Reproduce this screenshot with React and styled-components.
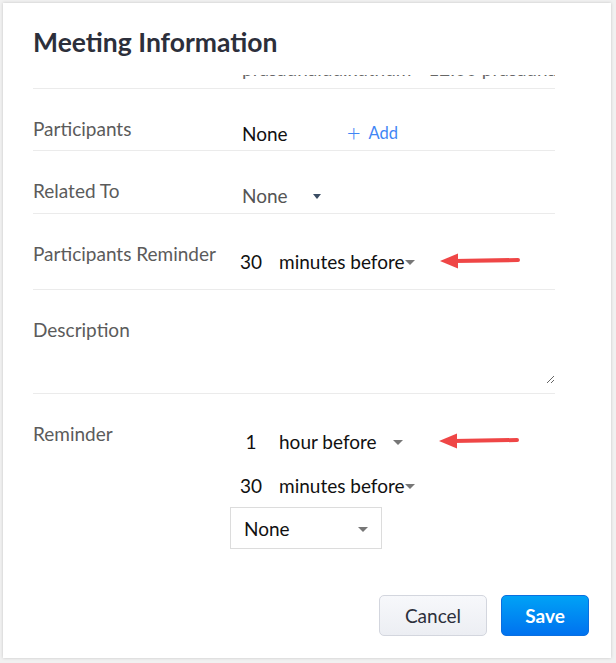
import React from "react";
import styled, { createGlobalStyle } from "styled-components";

const Global = createGlobalStyle`
  html, body { margin: 0; padding: 0; background: #f1f1f1; }
  body { font-family: Lato, "Noto Sans", sans-serif; padding: 3px 5px 5px 3px; }
  * { box-sizing: border-box; }
`;

const Card = styled.div`
  width: 608px;
  height: 655px;
  background: #fff;
  box-shadow: 0 0 3px rgba(0, 0, 0, 0.18);
  display: flex;
  flex-direction: column;
`;

const Title = styled.h1`
  margin: 0;
  height: 72px;
  flex-shrink: 0;
  padding: 22px 30px 0;
  font-size: 26.5px;
  line-height: 34px;
  font-weight: 700;
  color: #2c2f3b;
`;

const Body = styled.div`
  flex: 1;
  overflow: hidden;
  padding: 0 56px 0 30px;
`;

const Row = styled.div`
  display: grid;
  grid-template-columns: 209px 1fr;
  height: ${(p) => (p.$h ? `${p.$h}px` : "auto")};
  padding-top: 29px;
  border-bottom: ${(p) => (p.$last ? "none" : "1px solid #ebebeb")};
`;

const ClippedRow = styled.div`
  height: 14px;
  overflow: hidden;
  border-bottom: 1px solid #ebebeb;
  padding-left: 209px;
`;

const ClippedText = styled.div`
  margin-top: -17px;
  font-size: 19px;
  line-height: 22px;
  color: #666;
  white-space: nowrap;
`;

const Label = styled.div`
  font-size: 19px;
  line-height: 22px;
  color: #5b5b5b;
`;

const Value = styled.div`
  display: flex;
  flex-direction: column;
  align-items: flex-start;
  margin-top: ${(p) => p.$mt || 0}px;
`;

const InlineValue = styled.div`
  display: flex;
  align-items: center;
  height: 22px;
  margin-top: 4px;
  font-size: 19px;
  color: ${(p) => p.$color || "#111"};
`;

const AddLink = styled.span`
  margin-left: 59px;
  color: #3f86f5;
  font-size: 16.5px;
  display: inline-flex;
  align-items: center;
  gap: 8px;
`;

const Plus = styled.span`
  font-size: 24px;
  font-weight: 300;
  line-height: 1;
  margin-top: -3px;
`;

const PickSelect = styled.div`
  display: inline-flex;
  align-items: center;
  justify-content: space-between;
  min-width: ${(p) => p.$minw}px;
`;

const Caret = styled.span`
  width: 0;
  height: 0;
  border-left: ${(p) => p.$w / 2}px solid transparent;
  border-right: ${(p) => p.$w / 2}px solid transparent;
  border-top: ${(p) => p.$h}px solid ${(p) => p.$c || "#777"};
  flex-shrink: 0;
  margin-top: 2px;
`;

const ReminderLine = styled.div`
  display: flex;
  align-items: center;
  height: 44px;
  margin-left: -12px;
  font-size: 19px;
  color: #111;
`;

const Num = styled.span`
  width: 42px;
  text-align: center;
`;

const Unit = styled(PickSelect)`
  margin-left: 7px;
`;

const ArrowWrap = styled.div`
  margin-left: ${(p) => p.$ml}px;
  display: flex;
  align-items: center;
`;

const BoxSelect = styled.div`
  margin-left: -12px;
  width: 152px;
  height: 42px;
  border: 1px solid #dcdcdc;
  display: flex;
  align-items: center;
  justify-content: space-between;
  padding: 0 13px 0 13px;
  font-size: 19px;
  color: #111;
`;

const TextArea = styled.textarea`
  width: 100%;
  height: 65px;
  border: none;
  outline: none;
  resize: vertical;
  font-family: inherit;
  font-size: 17px;
`;

const Footer = styled.div`
  display: flex;
  justify-content: flex-end;
  gap: 14px;
  padding: 0 22px 22px 0;
`;

const Button = styled.button`
  height: 41px;
  border-radius: 5px;
  font-family: Lato, sans-serif;
  font-size: 19px;
  cursor: pointer;
  padding: 0;
  width: ${(p) => p.$w}px;
  ${(p) =>
    p.$primary
      ? `
    background: linear-gradient(#00a2f6, #0072ef);
    border: 1px solid #0a6fe0;
    color: #fff;
    font-weight: 700;
  `
      : `
    background: linear-gradient(#f7f8fb, #eceef3);
    border: 1px solid #d3d6de;
    color: #2c2f3b;
  `}
`;

function RedArrow() {
  return (
    <svg width="82" height="18" viewBox="0 0 82 18">
      <line x1="14" y1="9" x2="78" y2="8" stroke="#ef4646" strokeWidth="4" strokeLinecap="round" />
      <polygon points="0,9 18,1.5 18,16.5" fill="#ef4646" />
    </svg>
  );
}

export default function App() {
  return (
    <>
      <Global />
      <Card>
        <Title>Meeting Information</Title>
        <Body>
          <ClippedRow>
            <ClippedText>prasadnaidu.kuthum - 12:00 prasadnaidu.m &nbsp; ·</ClippedText>
          </ClippedRow>
          <Row $h={62}>
            <Label>Participants</Label>
            <Value>
              <InlineValue>
                None
                <AddLink>
                  <Plus>+</Plus>Add
                </AddLink>
              </InlineValue>
            </Value>
          </Row>
          <Row $h={63}>
            <Label>Related To</Label>
            <Value>
              <InlineValue $color="#555">
                <PickSelect $minw={79}>
                  None
                  <Caret $w={8} $h={5} $c="#3b4d63" />
                </PickSelect>
              </InlineValue>
            </Value>
          </Row>
          <Row $h={76}>
            <Label>Participants Reminder</Label>
            <Value $mt={-4}>
              <ReminderLine>
                <Num>30</Num>
                <Unit $minw={124}>
                  minutes before
                  <Caret $w={10} $h={5} />
                </Unit>
                <ArrowWrap $ml={25}>
                  <RedArrow />
                </ArrowWrap>
              </ReminderLine>
            </Value>
          </Row>
          <Row $h={104}>
            <Label>Description</Label>
            <Value>
              <TextArea />
            </Value>
          </Row>
          <Row $last>
            <Label>Reminder</Label>
            <Value $mt={-4}>
              <ReminderLine>
                <Num>1</Num>
                <Unit $minw={124}>
                  hour before
                  <Caret $w={10} $h={5} />
                </Unit>
                <ArrowWrap $ml={36}>
                  <RedArrow />
                </ArrowWrap>
              </ReminderLine>
              <ReminderLine>
                <Num>30</Num>
                <Unit $minw={124}>
                  minutes before
                  <Caret $w={10} $h={5} />
                </Unit>
              </ReminderLine>
              <BoxSelect>
                None
                <Caret $w={10} $h={5} />
              </BoxSelect>
            </Value>
          </Row>
        </Body>
        <Footer>
          <Button $w={108}>Cancel</Button>
          <Button $primary $w={88}>Save</Button>
        </Footer>
      </Card>
    </>
  );
}
